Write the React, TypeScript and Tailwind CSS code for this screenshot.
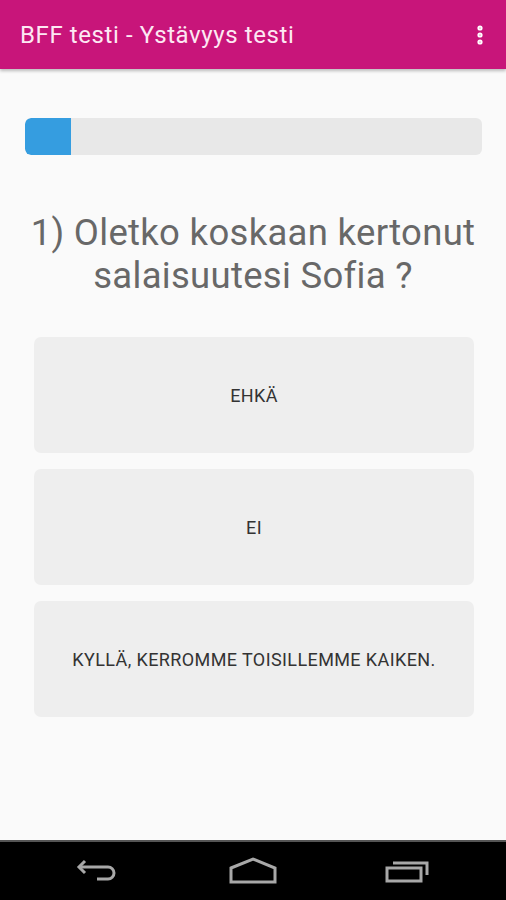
import { EllipsisVertical } from 'lucide-react';

const answers = ['EHKÄ', 'EI', 'KYLLÄ, KERROMME TOISILLEMME KAIKEN.'];

export default function App() {
  return (
    <div className="w-[506px] h-[900px] flex flex-col bg-[#fafafa] font-['Roboto',sans-serif] overflow-hidden">
      {/* App bar */}
      <div className="h-[69px] shrink-0 bg-[#c8157a] flex items-center justify-between pl-5 pr-[14px] shadow-[0_2px_3px_rgba(0,0,0,0.25)] z-10">
        <h1 className="text-[24px] tracking-[0.6px] text-[#fde8f3] leading-none">BFF testi - Ystävyys testi</h1>
        <EllipsisVertical className="w-6 h-6 text-white" strokeWidth={3.2} />
      </div>

      <div className="flex-1 flex flex-col px-[25px] pt-[49px]">
        {/* Progress */}
        <div className="h-[37px] w-[457px] rounded-[6px] bg-[#e8e8e8] overflow-hidden flex">
          <div className="w-[46px] h-full bg-[#359de0] rounded-l-[6px]" />
        </div>

        {/* Question */}
        <p className="mt-[56px] text-center text-[36.5px] leading-[43px] tracking-[0.3px] text-[#686868]">
          1) Oletko koskaan kertonut
          <br />
          salaisuutesi Sofia ?
        </p>

        {/* Answers */}
        <div className="mt-[40px] flex flex-col gap-4 px-[9px]">
          {answers.map(a => (
            <button
              key={a}
              className="h-[116px] w-[440px] rounded-[7px] bg-[#eeeeee] flex items-center justify-center text-[18px] tracking-[0.4px] text-[#333333]"
            >
              {a}
            </button>
          ))}
        </div>
      </div>

      {/* Nav bar */}
      <div className="h-[60px] shrink-0 bg-black border-t-2 border-[#555555] grid grid-cols-[155px_155px_155px] justify-center items-center">
        <div className="flex justify-center">
          <svg width="46" height="30" viewBox="0 0 46 30" fill="none" stroke="#a8a8a8" strokeWidth="3">
            <path d="M10 5 L4 11 L10 17" />
            <path d="M4 11 H33 a6 6 0 0 1 0 12 H22" />
          </svg>
        </div>
        <div className="flex justify-center">
          <svg width="48" height="28" viewBox="0 0 48 28" fill="none" stroke="#a8a8a8" strokeWidth="3">
            <path d="M2 11 L24 2 L46 11 V25 H2 Z" />
          </svg>
        </div>
        <div className="flex justify-center">
          <svg width="46" height="26" viewBox="0 0 46 26" fill="none" stroke="#a8a8a8" strokeWidth="3">
            <rect x="2" y="10" width="34" height="13" />
            <path d="M8 5 H42 V17" />
          </svg>
        </div>
      </div>
    </div>
  );
}
